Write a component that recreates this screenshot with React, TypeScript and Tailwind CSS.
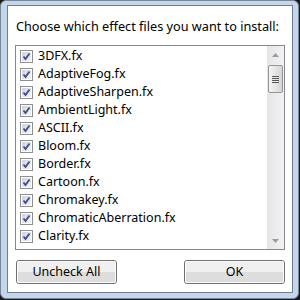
import React, { useState } from 'react';

const files = [
  '3DFX.fx',
  'AdaptiveFog.fx',
  'AdaptiveSharpen.fx',
  'AmbientLight.fx',
  'ASCII.fx',
  'Bloom.fx',
  'Border.fx',
  'Cartoon.fx',
  'Chromakey.fx',
  'ChromaticAberration.fx',
  'Clarity.fx',
];

function CheckBox({ checked }: { checked: boolean }) {
  return (
    <div className="w-[13px] h-[13px] shrink-0 border border-[#8f8f8f] bg-white p-[1px]">
      <div className="w-full h-full bg-gradient-to-br from-[#d0d3d8] to-[#f4f4f4] relative">
        {checked && (
          <svg width="9" height="9" viewBox="0 0 9 9" className="absolute left-0 top-0">
            <path d="M1.5 4.5 L3.5 7 L7.5 1.5" fill="none" stroke="#3b4c8c" strokeWidth="1.8" />
          </svg>
        )}
      </div>
    </div>
  );
}

function WinButton({ label }: { label: string }) {
  return (
    <button className="w-[101px] h-[24px] rounded-[3px] border border-[#707070] p-0 bg-white">
      <div className="w-full h-full rounded-[2px] border border-[#fbfbfb] flex flex-col overflow-hidden relative">
        <div className="flex-1 bg-[#f0f0f0]" />
        <div className="flex-1 bg-[#dddddd]" />
        <span className="absolute inset-0 flex items-center justify-center text-[12.5px] text-black leading-none">
          {label}
        </span>
      </div>
    </button>
  );
}

export default function App() {
  const [checked] = useState(files.map(() => true));

  return (
    <div className="w-[300px] h-[300px] bg-[#1a1a1a] overflow-hidden" style={{ fontFamily: '"Noto Sans", "Open Sans", sans-serif' }}>
      <div className="w-[299px] h-[299px] rounded-[6px] border border-[#7a8797] bg-[#c3d6ec] pl-[6px] pr-[5px] pt-[4px] pb-[5px]">
        <div className="w-full h-full border border-[#6f7e90] bg-white flex flex-col px-[7px]">
          <div className="pt-[12px] pl-[1px] text-[12.7px] leading-[16px] text-black whitespace-nowrap">
            Choose which effect files you want to install:
          </div>

          <div className="mt-[11px] h-[205px] border border-[#828790] flex">
            <div className="flex-1 flex flex-col pt-[1px]">
              {files.map((f, i) => (
                <div key={f} className="h-[18px] flex items-center gap-[5px] pl-[4px] text-[12.5px] text-black whitespace-nowrap">
                  <CheckBox checked={checked[i]} />
                  <span>{f}</span>
                </div>
              ))}
            </div>

            <div className="w-[17px] bg-gradient-to-r from-[#e5e5e5] to-[#f2f2f2] flex flex-col">
              <div className="h-[17px] flex items-center justify-center">
                <svg width="7" height="4" viewBox="0 0 7 4">
                  <path d="M0 4 L3.5 0 L7 4 Z" fill="#9a9a9a" />
                </svg>
              </div>
              <div className="mx-[1px] mt-[2px] h-[28px] rounded-[2px] border border-[#959595] bg-gradient-to-r from-[#f4f4f4] to-[#d5d5d5] flex flex-col items-center justify-center gap-[1px]">
                <div className="w-[7px] h-[1px] bg-[#5a5a5a]" />
                <div className="w-[7px] h-[1px] bg-[#5a5a5a]" />
                <div className="w-[7px] h-[1px] bg-[#5a5a5a]" />
                <div className="w-[7px] h-[1px] bg-[#5a5a5a]" />
              </div>
              <div className="flex-1" />
              <div className="h-[17px] flex items-center justify-center">
                <svg width="7" height="4" viewBox="0 0 7 4">
                  <path d="M0 0 L3.5 4 L7 0 Z" fill="#9a9a9a" />
                </svg>
              </div>
            </div>
          </div>

          <div className="mt-[10px] flex justify-between pl-[1px]">
            <WinButton label="Uncheck All" />
            <WinButton label="OK" />
          </div>
        </div>
      </div>
    </div>
  );
}
